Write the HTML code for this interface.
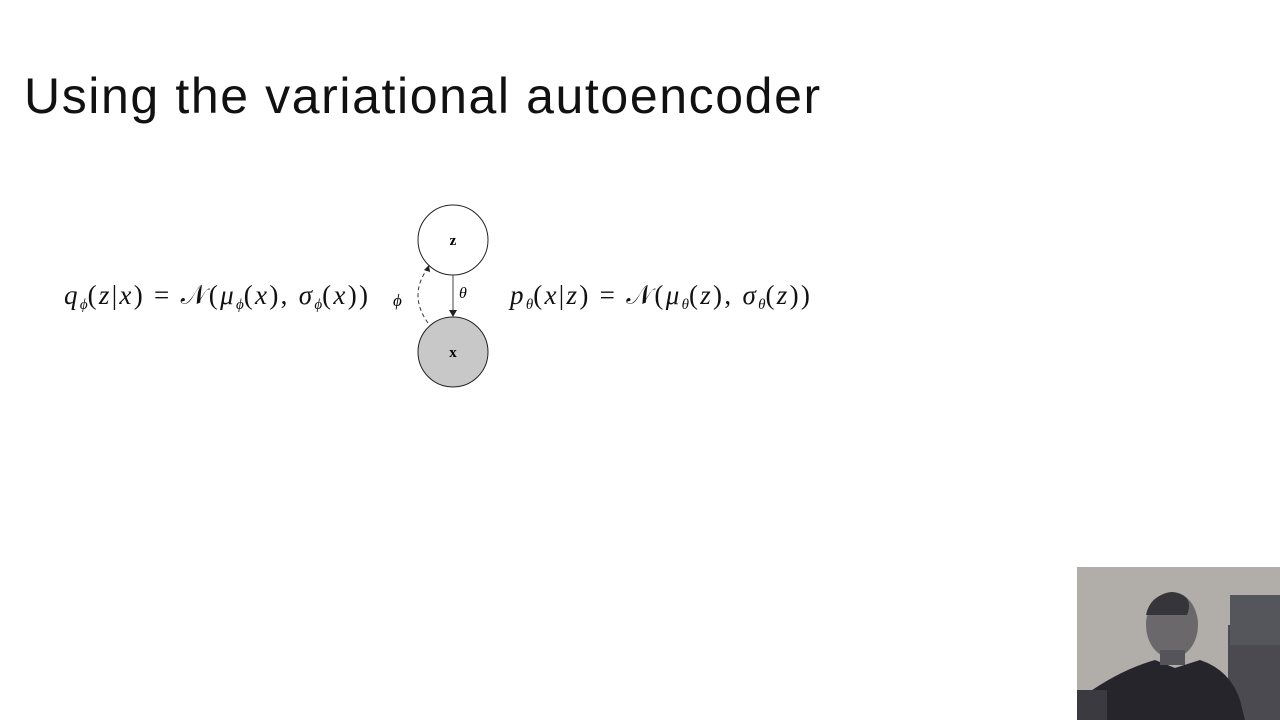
<!DOCTYPE html>
<html><head><meta charset="utf-8"><style>
body{margin:0;width:1280px;height:720px;background:#fff;position:relative;overflow:hidden;font-family:"Liberation Sans",sans-serif}
.t{position:absolute;left:24px;top:67px;font-size:50px;font-weight:300;color:#111;letter-spacing:1.6px;white-space:nowrap}
.m{position:absolute;font-family:"Liberation Serif",serif;font-size:27px;color:#111;white-space:nowrap;top:280px;letter-spacing:2.3px}
.m i{font-style:italic}
sub{font-size:15px;vertical-align:-5px;font-style:italic;letter-spacing:0}
</style></head><body>
<div class="t">Using the variational autoencoder</div>
<div class="m" style="left:64px"><i>q</i><sub>ϕ</sub>(<i>z</i>|<i>x</i>) = 𝒩(<i>μ</i><sub>ϕ</sub>(<i>x</i>), <i>σ</i><sub>ϕ</sub>(<i>x</i>))</div>
<div class="m" style="left:510px"><i>p</i><sub>θ</sub>(<i>x</i>|<i>z</i>) = 𝒩(<i>μ</i><sub>θ</sub>(<i>z</i>), <i>σ</i><sub>θ</sub>(<i>z</i>))</div>
<svg style="position:absolute;left:0;top:0" width="1280" height="720">
<circle cx="453" cy="240" r="35" fill="#fff" stroke="#222"/>
<circle cx="453" cy="352" r="35" fill="#c8c8c8" stroke="#222"/>
<text x="453" y="245" font-family="Liberation Serif" font-weight="bold" font-size="15" text-anchor="middle">z</text>
<text x="453" y="357" font-family="Liberation Serif" font-weight="bold" font-size="15" text-anchor="middle">x</text>
<line x1="453" y1="275" x2="453" y2="314" stroke="#444"/>
<path d="M449 310 L453 317 L457 310Z" fill="#222"/>
<path d="M428 323 Q408 295 428 268" fill="none" stroke="#333" stroke-dasharray="4,3"/>
<path d="M424 270 L429 265 L430 272Z" fill="#222"/>
<text x="459" y="298" font-family="Liberation Serif" font-style="italic" font-size="16">θ</text>
<text x="393" y="306" font-family="Liberation Serif" font-style="italic" font-size="17">ϕ</text>
<rect x="1077" y="567" width="203" height="153" fill="#b1ada9"/>
<rect x="1228" y="625" width="52" height="95" fill="#4a4a50"/>
<rect x="1230" y="595" width="50" height="50" fill="#55555c"/>
<path d="M1077 720 L1085 695 Q1120 670 1155 660 L1175 668 L1200 660 Q1230 670 1240 700 L1245 720Z" fill="#25252b"/>
<rect x="1077" y="690" width="30" height="30" fill="#3a3a40"/>
<ellipse cx="1172" cy="625" rx="26" ry="33" fill="#6a686a"/>
<path d="M1146 615 Q1150 595 1172 592 Q1195 595 1187 615Z" fill="#35353a"/>
<rect x="1160" y="650" width="25" height="15" fill="#55545a"/>
</svg>
</body></html>
